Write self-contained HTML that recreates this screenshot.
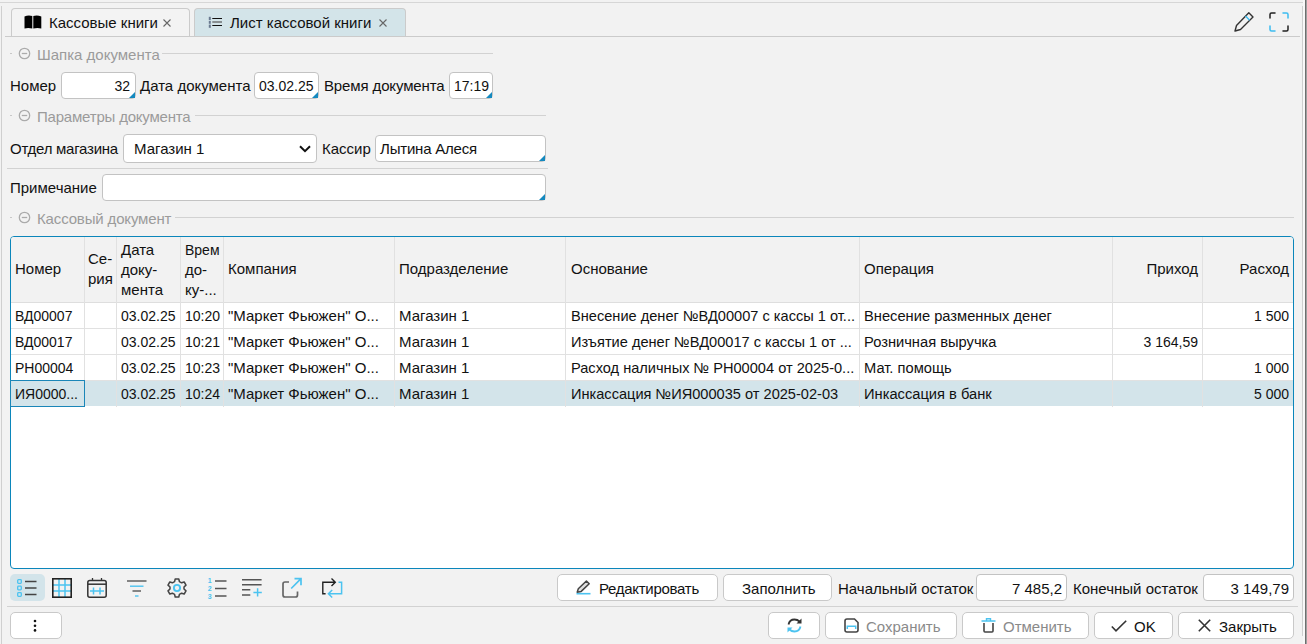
<!DOCTYPE html>
<html><head><meta charset="utf-8">
<style>
*{margin:0;padding:0;box-sizing:border-box}
html,body{width:1307px;height:644px;overflow:hidden;background:#f2f2f2}
body{position:relative;font-family:"Liberation Sans",sans-serif;font-size:15px;color:#111}
.a{position:absolute}
.t{position:absolute;white-space:nowrap;line-height:20px;height:20px}
.hl{position:absolute;height:1px;background:#d2d2d2}
.vl{position:absolute;width:1px;background:#d2d2d2}
.inp{position:absolute;background:#fff;border:1px solid #c3c3c3;border-radius:4px}
.tri{position:absolute;right:0;bottom:0;width:0;height:0;border-style:solid;border-width:0 0 6px 6px;border-color:transparent transparent #1489bf transparent}
.sec{color:#9b9b9b}
.btn{position:absolute;background:#fff;border:1px solid #c9c9c9;border-radius:5px}
.gc{position:absolute;top:237px;width:1px;height:170px;background:#e1e1e1}
.gr{position:absolute;left:11px;width:1282px;height:1px;background:#e1e1e1}
svg{position:absolute;overflow:visible}
</style></head><body>
<!-- frame -->
<div class="hl" style="left:0;top:2px;width:1305px;background:#d6d6d6"></div>
<div class="vl" style="left:1px;top:6px;height:638px;background:#cfcfcf"></div>
<div class="vl" style="left:1302px;top:6px;height:630px;background:#cfcfcf"></div>
<div class="vl" style="left:1303px;top:0;height:644px;width:2px;background:#f8f8f8"></div>
<div class="vl" style="left:1305px;top:0;height:644px;background:#6e6e6e"></div>
<div class="vl" style="left:1306px;top:0;height:644px;background:#a0a0a0"></div>

<!-- tabs -->
<div class="a" style="left:11px;top:8px;width:179px;height:29px;border:1px solid #cbcbcb;border-bottom:none;border-radius:4px 4px 0 0;background:#f3f3f3"></div>
<div class="a" style="left:194px;top:8px;width:212px;height:29px;border:1px solid #cbcbcb;border-bottom:none;border-radius:4px 4px 0 0;background:#d3e4e9"></div>
<div class="hl" style="left:5px;top:36px;width:1295px;background:#cbcbcb"></div>
<svg style="left:24px;top:15px" width="18" height="14" viewBox="0 0 18 14"><path d="M0.5 1.5 Q4 0 8.3 1 L8.3 13.6 Q4 12.6 0.5 13.6 Z M9.3 1 Q13.5 0 17.3 1.5 L17.3 13.6 Q13.5 12.6 9.3 13.6 Z" fill="#000"/></svg>
<div class="t" style="left:49px;top:13px">Кассовые книги</div>
<svg style="left:163px;top:19px" width="8" height="8" viewBox="0 0 8 8"><path d="M0.5 0.5 L7.5 7.5 M7.5 0.5 L0.5 7.5" stroke="#666" stroke-width="1.1"/></svg>
<svg style="left:204px;top:12px" width="20" height="20" viewBox="0 0 20 20"><g fill="#6a7a90"><rect x="4.8" y="4.8" width="2" height="3.2"/><rect x="4.8" y="8.8" width="2" height="3"/><rect x="4.8" y="12.6" width="2" height="3.2"/></g><path d="M8.3 6.5 H18 M8.3 13.5 H18" stroke="#111" stroke-width="1.2"/><path d="M8.3 10 H18" stroke="#555" stroke-width="1.2"/></svg>
<div class="t" style="left:230px;top:13px">Лист кассовой книги</div>
<svg style="left:379px;top:19px" width="8" height="8" viewBox="0 0 8 8"><path d="M0.5 0.5 L7.5 7.5 M7.5 0.5 L0.5 7.5" stroke="#666" stroke-width="1.1"/></svg>

<!-- top right icons -->
<svg style="left:1234px;top:12px" width="20" height="20" viewBox="0 0 20 20"><path d="M14.8 0.8 L19 5 L6.5 17.5 L1 19 L2.5 13.5 Z" fill="none" stroke="#333" stroke-width="1.4" stroke-linejoin="round"/><path d="M11.5 4 L15.7 8.2" stroke="#3cbcf0" stroke-width="1.4"/></svg>
<svg style="left:1269px;top:12px" width="20" height="20" viewBox="0 0 20 20"><g fill="none" stroke-width="1.5" stroke-linecap="round" stroke-linejoin="round"><path d="M1 6 V2.5 Q1 1 2.5 1 H6" stroke="#222"/><path d="M14 1 H17.5 Q19 1 19 2.5 V6" stroke="#3cbcf0"/><path d="M1 14 V17.5 Q1 19 2.5 19 H6" stroke="#3cbcf0"/><path d="M14 19 H17.5 Q19 19 19 17.5 V14" stroke="#222"/></g></svg>

<!-- section: Шапка -->
<div class="hl" style="left:10px;top:53px;width:2px;background:#c8c8c8"></div>
<svg style="left:18px;top:47px" width="13" height="13" viewBox="0 0 13 13"><circle cx="6.5" cy="6.5" r="5.2" fill="none" stroke="#ababab" stroke-width="1.3"/><path d="M3.8 6.5 H9.2" stroke="#ababab" stroke-width="1.3"/></svg>
<div class="t sec" style="left:37px;top:45px">Шапка документа</div>
<div class="hl" style="left:162px;top:53px;width:331px"></div>

<div class="t" style="left:10px;top:76px">Номер</div>
<div class="inp" style="left:61px;top:72px;width:75px;height:27px"><div class="tri"></div></div>
<div class="t" style="left:0;top:76px;width:130px;text-align:right;font-size:14px">32</div>
<div class="t" style="left:140px;top:76px">Дата документа</div>
<div class="inp" style="left:254px;top:72px;width:65px;height:27px"><div class="tri"></div></div>
<div class="t" style="left:259px;top:76px;font-size:14px">03.02.25</div>
<div class="t" style="left:324px;top:76px;letter-spacing:-0.13px">Время документа</div>
<div class="inp" style="left:449px;top:72px;width:44px;height:27px"><div class="tri"></div></div>
<div class="t" style="left:454px;top:76px;font-size:14px">17:19</div>

<!-- section: Параметры -->
<div class="hl" style="left:10px;top:115px;width:2px;background:#c8c8c8"></div>
<svg style="left:18px;top:109px" width="13" height="13" viewBox="0 0 13 13"><circle cx="6.5" cy="6.5" r="5.2" fill="none" stroke="#ababab" stroke-width="1.3"/><path d="M3.8 6.5 H9.2" stroke="#ababab" stroke-width="1.3"/></svg>
<div class="t sec" style="left:37px;top:107px;letter-spacing:-0.2px">Параметры документа</div>
<div class="hl" style="left:195px;top:115px;width:351px"></div>

<div class="t" style="left:10px;top:139px;letter-spacing:-0.25px">Отдел магазина</div>
<div class="inp" style="left:123px;top:134px;width:194px;height:29px"></div>
<div class="t" style="left:134px;top:139px">Магазин 1</div>
<svg style="left:299px;top:145px" width="12" height="8" viewBox="0 0 12 8"><path d="M1 1.2 L6 6.2 L11 1.2" fill="none" stroke="#111" stroke-width="2"/></svg>
<div class="t" style="left:322px;top:139px">Кассир</div>
<div class="inp" style="left:375px;top:135px;width:171px;height:27px"><div class="tri"></div></div>
<div class="t" style="left:380px;top:139px;letter-spacing:-0.2px">Лытина Алеся</div>
<div class="hl" style="left:7px;top:168px;width:541px"></div>

<div class="t" style="left:10px;top:178px">Примечание</div>
<div class="inp" style="left:102px;top:174px;width:444px;height:27px"><div class="tri"></div></div>

<!-- section: Кассовый документ -->
<div class="hl" style="left:10px;top:217px;width:2px;background:#c8c8c8"></div>
<svg style="left:18px;top:211px" width="13" height="13" viewBox="0 0 13 13"><circle cx="6.5" cy="6.5" r="5.2" fill="none" stroke="#ababab" stroke-width="1.3"/><path d="M3.8 6.5 H9.2" stroke="#ababab" stroke-width="1.3"/></svg>
<div class="t sec" style="left:37px;top:209px;letter-spacing:-0.15px">Кассовый документ</div>
<div class="hl" style="left:175px;top:217px;width:1119px"></div>

<!-- table -->
<div class="a" style="left:10px;top:236px;width:1284px;height:333px;border:1px solid #0b86bb;border-radius:4px;background:#fff;overflow:hidden">
  <div class="a" style="left:0;top:0;width:1282px;height:66px;background:#f2f2f2;border-bottom:1px solid #dedede"></div>
</div>
<div class="gr" style="top:328px"></div>
<div class="gr" style="top:354px"></div>
<div class="gr" style="top:380px"></div>
<div class="a" style="left:11px;top:381px;width:1282px;height:25px;background:#d3e4ea"></div>
<div class="gc" style="left:84px"></div>
<div class="gc" style="left:116px"></div>
<div class="gc" style="left:180px"></div>
<div class="gc" style="left:223px"></div>
<div class="gc" style="left:394px"></div>
<div class="gc" style="left:565px"></div>
<div class="gc" style="left:859px"></div>
<div class="gc" style="left:1112px"></div>
<div class="gc" style="left:1202px"></div>
<div class="a" style="left:10px;top:380px;width:75px;height:27px;border:1px solid #1a86b8"></div>

<!-- header text -->
<div class="t" style="left:15px;top:259px">Номер</div>
<div class="t" style="left:88px;top:249px">Се-</div>
<div class="t" style="left:88px;top:269px">рия</div>
<div class="t" style="left:121px;top:240px">Дата</div>
<div class="t" style="left:121px;top:260px">доку-</div>
<div class="t" style="left:121px;top:280px">мента</div>
<div class="t" style="left:185px;top:240px;font-size:14px">Врем</div>
<div class="t" style="left:185px;top:260px">до-</div>
<div class="t" style="left:185px;top:280px">ку-...</div>
<div class="t" style="left:228px;top:259px">Компания</div>
<div class="t" style="left:399px;top:259px">Подразделение</div>
<div class="t" style="left:571px;top:259px">Основание</div>
<div class="t" style="left:864px;top:259px">Операция</div>
<div class="t" style="left:1000px;top:259px;width:198px;text-align:right">Приход</div>
<div class="t" style="left:1100px;top:259px;width:189px;text-align:right">Расход</div>

<!-- rows -->
<div class="t" style="left:15px;top:306px;font-size:14px">ВД00007</div>
<div class="t" style="left:121px;top:306px;font-size:14px">03.02.25</div>
<div class="t" style="left:185px;top:306px;font-size:14px">10:20</div>
<div class="t" style="left:228px;top:306px">"Маркет Фьюжен" О...</div>
<div class="t" style="left:399px;top:306px">Магазин 1</div>
<div class="t" style="left:571px;top:306px;font-size:14.6px">Внесение денег №ВД00007 с кассы 1 от...</div>
<div class="t" style="left:864px;top:306px;font-size:14.7px">Внесение разменных денег</div>
<div class="t" style="left:1100px;top:306px;width:189px;text-align:right;font-size:14px">1 500</div>

<div class="t" style="left:15px;top:332px;font-size:14px">ВД00017</div>
<div class="t" style="left:121px;top:332px;font-size:14px">03.02.25</div>
<div class="t" style="left:185px;top:332px;font-size:14px">10:21</div>
<div class="t" style="left:228px;top:332px">"Маркет Фьюжен" О...</div>
<div class="t" style="left:399px;top:332px">Магазин 1</div>
<div class="t" style="left:571px;top:332px;font-size:14.6px">Изъятие денег №ВД00017 с кассы 1 от ...</div>
<div class="t" style="left:864px;top:332px;font-size:14.7px">Розничная выручка</div>
<div class="t" style="left:1000px;top:332px;width:198px;text-align:right;font-size:14px">3 164,59</div>

<div class="t" style="left:15px;top:358px;font-size:14px">РН00004</div>
<div class="t" style="left:121px;top:358px;font-size:14px">03.02.25</div>
<div class="t" style="left:185px;top:358px;font-size:14px">10:23</div>
<div class="t" style="left:228px;top:358px">"Маркет Фьюжен" О...</div>
<div class="t" style="left:399px;top:358px">Магазин 1</div>
<div class="t" style="left:571px;top:358px;font-size:14.6px">Расход наличных № РН00004 от 2025-0...</div>
<div class="t" style="left:864px;top:358px;font-size:14.7px">Мат. помощь</div>
<div class="t" style="left:1100px;top:358px;width:189px;text-align:right;font-size:14px">1 000</div>

<div class="t" style="left:15px;top:384px;font-size:14px">ИЯ0000...</div>
<div class="t" style="left:121px;top:384px;font-size:14px">03.02.25</div>
<div class="t" style="left:185px;top:384px;font-size:14px">10:24</div>
<div class="t" style="left:228px;top:384px">"Маркет Фьюжен" О...</div>
<div class="t" style="left:399px;top:384px">Магазин 1</div>
<div class="t" style="left:571px;top:384px;font-size:14.6px">Инкассация №ИЯ000035 от 2025-02-03</div>
<div class="t" style="left:864px;top:384px;font-size:14.7px">Инкассация в банк</div>
<div class="t" style="left:1100px;top:384px;width:189px;text-align:right;font-size:14px">5 000</div>

<!-- toolbar -->
<div class="a" style="left:10px;top:574px;width:35px;height:27px;background:#d3e4ea;border-radius:5px"></div>
<svg style="left:17px;top:579px" width="20" height="18" viewBox="0 0 20 18"><g fill="none" stroke="#4cc3f0" stroke-width="1.3"><rect x="0.7" y="0.7" width="3.6" height="3.6" rx="0.8"/><rect x="0.7" y="7.2" width="3.6" height="3.6" rx="0.8"/><rect x="0.7" y="13.7" width="3.6" height="3.6" rx="0.8"/></g><path d="M8 2.5 H19.5 M8 9 H19.5 M8 15.5 H19.5" stroke="#444" stroke-width="1.5"/></svg>
<svg style="left:52px;top:578px" width="20" height="20" viewBox="0 0 20 20"><path d="M7 1 V19 M13 1 V19 M1 7 H19 M1 13 H19" stroke="#4cc3f0" stroke-width="1.5"/><rect x="0.8" y="0.8" width="18.4" height="18.4" fill="none" stroke="#222" stroke-width="1.6"/></svg>
<svg style="left:87px;top:578px" width="20" height="20" viewBox="0 0 20 20"><rect x="0.8" y="2.5" width="18.4" height="16.7" rx="2" fill="none" stroke="#333" stroke-width="1.5"/><path d="M1 6.2 H19" stroke="#333" stroke-width="1.5"/><path d="M5.5 0 V2.5 M14.5 0 V2.5" stroke="#333" stroke-width="1.3"/><path d="M3 13 H17 M6.5 9.5 V16.5 M13 9.5 V16.5" stroke="#4cc3f0" stroke-width="1.5"/></svg>
<svg style="left:127px;top:580px" width="20" height="17" viewBox="0 0 20 17"><path d="M0 1 H19.5" stroke="#555" stroke-width="1.4"/><path d="M3 6.2 H16.5" stroke="#4cc3f0" stroke-width="1.4"/><path d="M5.5 11 H14" stroke="#555" stroke-width="1.4"/><path d="M8 16 H11.5" stroke="#4cc3f0" stroke-width="1.4"/></svg>
<svg style="left:167px;top:578px" width="20" height="20" viewBox="0 0 20 20"><path d="M8.2 1 H11.8 L12.4 3.6 L14.6 4.8 L17.2 4 L19 7.1 L17 9 V11 L19 12.9 L17.2 16 L14.6 15.2 L12.4 16.4 L11.8 19 H8.2 L7.6 16.4 L5.4 15.2 L2.8 16 L1 12.9 L3 11 V9 L1 7.1 L2.8 4 L5.4 4.8 L7.6 3.6 Z" fill="none" stroke="#444" stroke-width="1.5" stroke-linejoin="round"/><circle cx="10" cy="10" r="3.1" fill="none" stroke="#4cc3f0" stroke-width="1.9"/></svg>
<svg style="left:208px;top:578px" width="19" height="20" viewBox="0 0 19 20"><g fill="#4cc3f0" font-family="Liberation Sans" font-size="7" font-weight="bold"><text x="-0.3" y="5.2">1</text><text x="-0.3" y="12.9">2</text><text x="-0.3" y="20.5">3</text></g><path d="M7 3 H18.5 M7 10.6 H18.5 M7 18.1 H18.5" stroke="#555" stroke-width="1.5"/></svg>
<svg style="left:242px;top:579px" width="20" height="19" viewBox="0 0 20 19"><path d="M0 0.8 H19.6 M0 5.8 H19.6 M0 10.8 H8.3 M0 15.9 H8.3" stroke="#555" stroke-width="1.5"/><path d="M11.4 13.4 H19.8 M15.6 9.2 V17.6" stroke="#4cc3f0" stroke-width="1.5"/></svg>
<svg style="left:282px;top:577px" width="21" height="21" viewBox="0 0 21 21"><path d="M7 5 H3 Q1 5 1 7 V18 Q1 20 3 20 H13.5 Q15.5 20 15.5 18 V14.5" fill="none" stroke="#666" stroke-width="1.7"/><path d="M9.2 11.5 L19 1.7 M12.5 1.7 H19 V8.2" fill="none" stroke="#4cc3f0" stroke-width="1.7"/></svg>
<svg style="left:322px;top:577px" width="21" height="21" viewBox="0 0 21 21"><path d="M3.6 16.8 H0.8 V5.2 H13.3 M9.5 1.5 L13.3 5.2 L9.5 9" fill="none" stroke="#222" stroke-width="1.4"/><path d="M16.5 5.2 H19.6 V16.8 H6.6 M10.2 13 L6.4 16.8 L10.2 20.5" fill="none" stroke="#4cc3f0" stroke-width="1.5"/></svg>

<div class="btn" style="left:557px;top:574px;width:161px;height:27px"></div>
<svg style="left:576px;top:580px" width="15" height="15" viewBox="0 0 15 15"><path d="M1.2 12.2 L2.3 8.8 L10.4 1 L13.2 3.8 L5.2 11.4 Z" fill="#e0e0e0" stroke="#444" stroke-width="1.5" stroke-linejoin="round"/><path d="M0.5 13.7 H14.5" stroke="#4cc3f0" stroke-width="1.6"/></svg>
<div class="t" style="left:599px;top:579px;letter-spacing:-0.28px">Редактировать</div>
<div class="btn" style="left:723px;top:574px;width:109px;height:27px"></div>
<div class="t" style="left:742px;top:579px">Заполнить</div>
<div class="t" style="left:838px;top:579px">Начальный остаток</div>
<div class="inp" style="left:976px;top:574px;width:91px;height:27px"></div>
<div class="t" style="left:0;top:579px;width:1062px;text-align:right">7 485,2</div>
<div class="t" style="left:1073px;top:579px">Конечный остаток</div>
<div class="inp" style="left:1203px;top:574px;width:91px;height:27px"></div>
<div class="t" style="left:0;top:579px;width:1289px;text-align:right">3 149,79</div>

<div class="hl" style="left:7px;top:606px;width:1291px"></div>

<!-- bottom buttons -->
<div class="btn" style="left:10px;top:612px;width:52px;height:27px"></div>
<svg style="left:33px;top:619px" width="4" height="14" viewBox="0 0 4 14"><circle cx="2" cy="2" r="1.3" fill="#111"/><circle cx="2" cy="6.7" r="1.3" fill="#111"/><circle cx="2" cy="11.4" r="1.3" fill="#111"/></svg>

<div class="btn" style="left:768px;top:612px;width:52px;height:27px"></div>
<svg style="left:787px;top:618px" width="15" height="15" viewBox="0 0 15 15"><path d="M1.5 6.5 Q2.5 1.5 7.5 1.5 Q10.5 1.5 12.5 3.5" fill="none" stroke="#333" stroke-width="1.8"/><path d="M14.5 0.5 V5.5 H9.5 Z" fill="#333"/><path d="M13.5 8.5 Q12.5 13.5 7.5 13.5 Q4.5 13.5 2.5 11.5" fill="none" stroke="#4cc3f0" stroke-width="1.8"/><path d="M0.5 14.5 V9.5 H5.5 Z" fill="#4cc3f0"/></svg>

<div class="btn" style="left:825px;top:612px;width:132px;height:27px"></div>
<svg style="left:844px;top:618px" width="15" height="15" viewBox="0 0 15 15"><path d="M1 3 Q1 1 3 1 H10.5 L14 4.5 V12 Q14 14 12 14 H3 Q1 14 1 12 Z" fill="none" stroke="#444" stroke-width="1.6"/><path d="M3.3 11 V8.3 H11.7 V11" fill="none" stroke="#4cc3f0" stroke-width="1.5"/></svg>
<div class="t sec" style="left:866px;top:617px;color:#8a8a8a">Сохранить</div>

<div class="btn" style="left:962px;top:612px;width:127px;height:27px"></div>
<svg style="left:981px;top:618px" width="15" height="15" viewBox="0 0 15 15"><path d="M0.5 3 H14.5 M5.5 3 V0.8 H9.5 V3" fill="none" stroke="#4cc3f0" stroke-width="1.4"/><path d="M3 5 V13 Q3 14 4 14 H11 Q12 14 12 13 V5" fill="none" stroke="#444" stroke-width="1.6"/></svg>
<div class="t sec" style="left:1003px;top:617px;color:#8a8a8a">Отменить</div>

<div class="btn" style="left:1094px;top:612px;width:79px;height:27px"></div>
<svg style="left:1111px;top:620px" width="16" height="12" viewBox="0 0 16 12"><path d="M0.8 6.5 L5 10.8 L15.2 0.8" fill="none" stroke="#333" stroke-width="1.6"/></svg>
<div class="t" style="left:1134px;top:617px">OK</div>

<div class="btn" style="left:1178px;top:612px;width:116px;height:27px"></div>
<svg style="left:1198px;top:619px" width="13" height="13" viewBox="0 0 13 13"><path d="M0.8 0.8 L12.2 12.2 M12.2 0.8 L0.8 12.2" stroke="#333" stroke-width="1.6"/></svg>
<div class="t" style="left:1219px;top:617px">Закрыть</div>

</body></html>
